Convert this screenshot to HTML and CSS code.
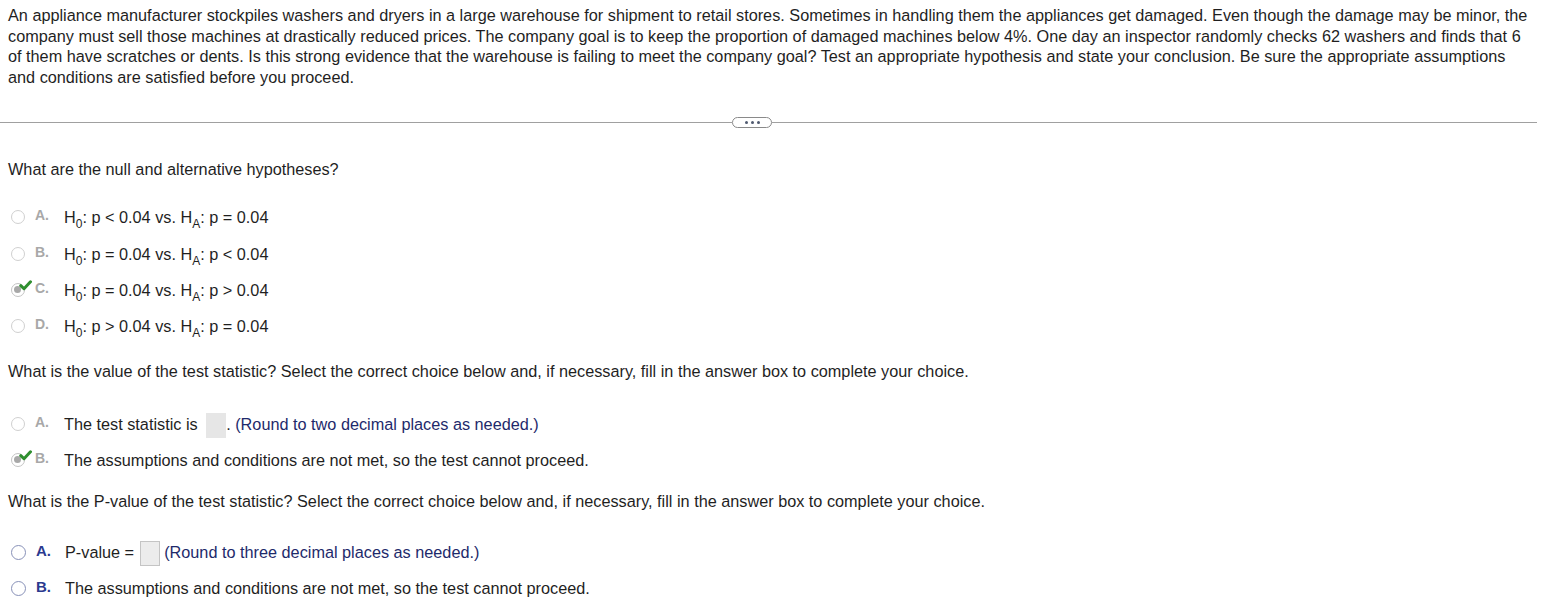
FILE: index.html
```html
<!DOCTYPE html>
<html>
<head>
<meta charset="utf-8">
<link rel="stylesheet" href="styles.css">
</head>
<body>
<div class="page">
  <p class="problem">An appliance manufacturer stockpiles washers and dryers in a large warehouse for shipment to retail stores. Sometimes in handling them the appliances get damaged. Even though the damage may be minor, the company must sell those machines at drastically reduced prices. The company goal is to keep the proportion of damaged machines below 4%. One day an inspector randomly checks 62 washers and finds that 6 of them have scratches or dents. Is this strong evidence that the warehouse is failing to meet the company goal? Test an appropriate hypothesis and state your conclusion. Be sure the appropriate assumptions and conditions are satisfied before you proceed.</p>

  <div class="divider">
    <div class="line left"></div>
    <div class="pill"><span class="dot"></span><span class="dot"></span><span class="dot"></span></div>
    <div class="line right"></div>
  </div>

  <div class="question q1">What are the null and alternative hypotheses?</div>
  <div class="options">
    <div class="opt"><span class="radio"></span><span class="lbl">A.</span><span class="txt">H<sub>0</sub>: p &lt; 0.04 vs. H<sub>A</sub>: p = 0.04</span></div>
    <div class="opt"><span class="radio"></span><span class="lbl">B.</span><span class="txt">H<sub>0</sub>: p = 0.04 vs. H<sub>A</sub>: p &lt; 0.04</span></div>
    <div class="opt"><span class="radio checked"><svg class="check" viewBox="0 0 12 10" width="13" height="11"><path d="M1.6 5.2 L4.6 8 L10.6 1.6" fill="none" stroke="#2f8f2f" stroke-width="2.8" stroke-linecap="round" stroke-linejoin="round"/></svg></span><span class="lbl">C.</span><span class="txt">H<sub>0</sub>: p = 0.04 vs. H<sub>A</sub>: p &gt; 0.04</span></div>
    <div class="opt"><span class="radio"></span><span class="lbl">D.</span><span class="txt">H<sub>0</sub>: p &gt; 0.04 vs. H<sub>A</sub>: p = 0.04</span></div>
  </div>

  <div class="question q2">What is the value of the test statistic? Select the correct choice below and, if necessary, fill in the answer box to complete your choice.</div>
  <div class="options opts2">
    <div class="opt"><span class="radio"></span><span class="lbl">A.</span><span class="txt">The test statistic is <span class="box"></span>. <span class="note">(Round to two decimal places as needed.)</span></span></div>
    <div class="opt"><span class="radio checked"><svg class="check" viewBox="0 0 12 10" width="13" height="11"><path d="M1.6 5.2 L4.6 8 L10.6 1.6" fill="none" stroke="#2f8f2f" stroke-width="2.8" stroke-linecap="round" stroke-linejoin="round"/></svg></span><span class="lbl">B.</span><span class="txt">The assumptions and conditions are not met, so the test cannot proceed.</span></div>
  </div>

  <div class="question q3">What is the P-value of the test statistic? Select the correct choice below and, if necessary, fill in the answer box to complete your choice.</div>
  <div class="options opts3">
    <div class="opt active"><span class="radio"></span><span class="lbl">A.</span><span class="txt">P-value = <span class="box"></span> <span class="note">(Round to three decimal places as needed.)</span></span></div>
    <div class="opt active"><span class="radio"></span><span class="lbl">B.</span><span class="txt">The assumptions and conditions are not met, so the test cannot proceed.</span></div>
  </div>
</div>
</body>
</html>
```

FILE: styles.css
```css
html, body {
  margin: 0;
  padding: 0;
  background: #ffffff;
}
body {
  font-family: "Liberation Sans", Arial, sans-serif;
  font-size: 16.25px;
  color: #1f1f1f;
}
.page {
  width: 1537px;
  padding-top: 5px;
}
.problem {
  margin: 0;
  padding: 0 8px;
  line-height: 20.5px;
  width: 1521px;
}
.divider {
  display: flex;
  align-items: center;
  height: 11px;
  margin-top: 30px;
}
.line {
  height: 1px;
  background: #a0a0a0;
}
.line.left { width: 732px; }
.line.right { flex: 1; }
.pill {
  width: 40px;
  height: 11px;
  box-sizing: border-box;
  border: 1px solid #8a8a8a;
  border-radius: 6px;
  display: flex;
  justify-content: center;
  align-items: center;
  gap: 3px;
}
.dot {
  width: 3px;
  height: 3px;
  border-radius: 50%;
  background: #505a70;
}
.question {
  padding-left: 8px;
  line-height: 20px;
}
.q1 { margin-top: 31px; }
.q2 { margin-top: 16px; }
.q3 { margin-top: 13px; }
.options {
  margin-top: 20px;
}
.opts2 { margin-top: 26px; }
.opts3 { margin-top: 24px; }
.opt {
  display: flex;
  align-items: center;
  height: 36.4px;
  padding-left: 11px;
}
.opts2 .opt, .opts3 .opt { height: 35.7px; }
.radio {
  position: relative;
  width: 14px;
  height: 14px;
  box-sizing: border-box;
  border: 1.5px solid #d0d0d0;
  border-radius: 50%;
  background: #fff;
  flex: none;
}
.radio.checked {
  border-color: #c4c4c4;
}
.radio.checked::after {
  content: "";
  position: absolute;
  left: 2px;
  top: 2px;
  width: 7px;
  height: 7px;
  border-radius: 50%;
  background: #a8a8a8;
}
.check {
  position: absolute;
  left: 7px;
  top: -4px;
  z-index: 1;
}
.lbl {
  width: 29px;
  padding-left: 10px;
  box-sizing: border-box;
  color: #a8a8a8;
  font-size: 14px;
  font-weight: bold;
  margin-top: -4px;
  flex: none;
}
.txt {
  display: block;
  padding-left: 10px;
  white-space: nowrap;
  line-height: 26px;
}
sub {
  font-size: 12px;
  vertical-align: -5px;
  line-height: 0;
}
.box {
  display: inline-block;
  width: 20px;
  height: 25px;
  background: #e6e6e6;
  margin: 0 0 0 4px;
  vertical-align: middle;
}
.note {
  color: #1e2a6b;
}
.opts3 .box {
  width: 19px;
  height: 25px;
  background: #ececec;
  border: 1px solid #c4c4c4;
  box-sizing: border-box;
  width: 20px;
  margin: 0 0 0 1px;
}
.opt.active .radio {
  border-color: #8891b8;
  border-width: 1.5px;
  width: 15px;
  height: 15px;
}
.opt.active .lbl {
  color: #2b3a8f;
  font-size: 15px;
}
```
